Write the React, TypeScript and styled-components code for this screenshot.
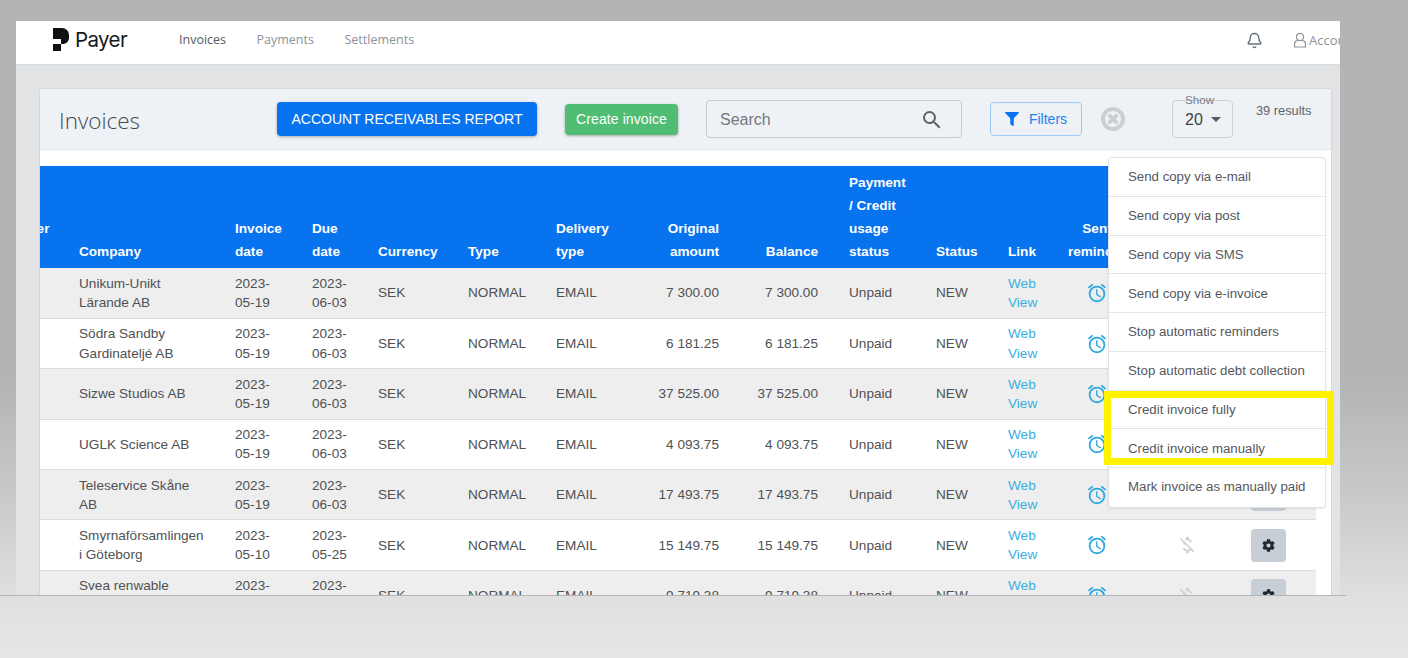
import * as React from 'react';
import styled, { createGlobalStyle } from 'styled-components';
import { Bell } from 'lucide-react';
import { FaCog, FaFilter } from 'react-icons/fa';
import { MdMoneyOff, MdOutlineAlarm, MdSearch } from 'react-icons/md';

const Global = createGlobalStyle`
  html, body { margin: 0; padding: 0; }
  body { font-family: "Liberation Sans", Arial, sans-serif; }
`;

const Desktop = styled.div`
  width: 1408px;
  height: 658px;
  overflow: hidden;
  padding-top: 21px;
  box-sizing: border-box;
  background: linear-gradient(180deg, #b3b4b3 0, #b3b4b3 58%, #c9cac9 76%, #dfe0df 91%, #e6e6e6 100%);
`;

const Window = styled.div`
  width: 1324px;
  height: 574px;
  margin-left: 16px;
  overflow: hidden;
  background: #e1e3e5;
  display: flex;
  flex-direction: column;
`;

const Ledge = styled.div`
  width: 1346px;
  height: 1px;
  background: #b4b6b6;
`;

const Nav = styled.nav`
  flex: none;
  height: 37px;
  background: #fff;
  border-bottom: 1px solid #d8dbde;
  display: flex;
  align-items: center;
  padding: 0 0 6px 37px;
  white-space: nowrap;
  overflow: hidden;
`;

const Logo = styled.div`
  display: flex;
  align-items: center;
  gap: 6px;
  width: 126px;
  font-family: Inter, sans-serif;
  font-size: 20.5px;
  letter-spacing: -0.6px;
  color: #16181b;
`;

const NavLink = styled.a<{ $active?: boolean }>`
  font-family: "Open Sans", sans-serif;
  font-size: 12.5px;
  color: ${(p) => (p.$active ? '#555b62' : '#8d939a')};
  margin-right: 30.5px;
`;

const Spacer = styled.div`
  flex: 1;
`;

const BellIcon = styled(Bell)`
  flex: none;
  color: #69727c;
  margin: 2px 30px 0 0;
`;

const Account = styled.div`
  flex: none;
  width: 88px;
  margin-right: -41px;
  display: flex;
  align-items: center;
  gap: 2px;
  font-family: "Open Sans", sans-serif;
  font-size: 13px;
  color: #8d939a;
`;

const Main = styled.main`
  flex: 1;
  padding: 23px 8px 0 23px;
`;

const Card = styled.section`
  position: relative;
  height: 520px;
  background: #fff;
  border: 1px solid #d3d6da;
  border-radius: 3px;
  box-sizing: border-box;
`;

const CardHead = styled.header`
  height: 61px;
  background: #eef1f5;
  border-bottom: 1px solid #e4e6e9;
  display: flex;
  align-items: center;
  padding-left: 19px;
  box-sizing: border-box;
`;

const Title = styled.h1`
  width: 218px;
  margin: 2px 0 0;
  flex: none;
  font-family: "Open Sans", sans-serif;
  font-weight: 300;
  font-size: 22.5px;
  color: #44494f;
`;

const Button = styled.button<{ $bg: string; $w: number; $h: number }>`
  flex: none;
  width: ${(p) => p.$w}px;
  height: ${(p) => p.$h}px;
  border: 0;
  padding: 0;
  border-radius: 4px;
  background: ${(p) => p.$bg};
  color: #fff;
  font-family: "Liberation Sans", Arial, sans-serif;
  font-size: 14px;
  box-shadow: 0 1px 3px rgba(0, 0, 0, 0.3);
`;

const CreateButton = styled(Button)`
  margin-left: 28px;
  letter-spacing: 0.1px;
`;

const SearchBox = styled.div`
  flex: none;
  width: 256px;
  height: 38px;
  margin-left: 28px;
  padding: 1px 17px 0 13px;
  box-sizing: border-box;
  border: 1px solid #c5cad0;
  border-radius: 4px;
  display: flex;
  align-items: center;
  justify-content: space-between;
  font-size: 16px;
  color: #75797e;
  svg {
    color: #5f6368;
  }
`;

const FilterButton = styled.button`
  flex: none;
  width: 92px;
  height: 34px;
  margin-left: 28px;
  background: transparent;
  border: 1px solid #9fcaf6;
  border-radius: 4px;
  display: flex;
  align-items: center;
  justify-content: center;
  gap: 10px;
  color: #2482ee;
  font-family: "Liberation Sans", Arial, sans-serif;
  font-size: 14px;
  svg {
    color: #0773ee;
  }
`;

const ClearIcon = styled.svg`
  flex: none;
  width: 24px;
  height: 24px;
  margin-left: 19px;
`;

const ShowBox = styled.div`
  position: relative;
  flex: none;
  width: 61px;
  height: 38px;
  margin-left: 47px;
  padding: 1px 0 0 12px;
  box-sizing: border-box;
  border: 1px solid #cdd1d6;
  border-radius: 4px;
  display: flex;
  align-items: center;
  gap: 8px;
  font-size: 16px;
  color: #3f4348;
`;

const ShowLabel = styled.span`
  position: absolute;
  top: -8px;
  left: 12px;
  font-size: 11.7px;
  line-height: 13px;
  color: #7c8186;
`;

const Caret = styled.span`
  width: 0;
  height: 0;
  border-left: 5px solid transparent;
  border-right: 5px solid transparent;
  border-top: 5px solid #55595e;
`;

const Results = styled.div`
  flex: none;
  align-self: flex-start;
  margin: 14px 0 0 23px;
  font-size: 12.8px;
  color: #5f6469;
`;

const TableScroll = styled.div`
  width: 1276px;
  margin-top: 16px;
  overflow: hidden;
`;

const Table = styled.table`
  width: 1347px;
  margin-left: -71px;
  table-layout: fixed;
  border-collapse: collapse;
  font-size: 13.6px;
`;

const Th = styled.th<{ $align?: string; $pr?: number }>`
  background: #0773ee;
  color: #fff;
  font-weight: 700;
  line-height: 23px;
  vertical-align: bottom;
  padding: 5px ${(p) => p.$pr ?? 12}px 5px 12px;
  text-align: ${(p) => p.$align ?? 'left'};
  overflow: hidden;
`;

const CustomerTh = styled(Th)`
  padding-left: 17px;
`;

const Tr = styled.tr`
  &:nth-child(odd) {
    background: #eeeeee;
  }
  &:nth-child(even) {
    background: #fff;
  }
  border-bottom: 1px solid #d9dce0;
`;

const Td = styled.td<{ $align?: string; $pr?: number }>`
  height: 50.4px;
  box-sizing: border-box;
  padding: 0 ${(p) => p.$pr ?? 12}px 0 12px;
  line-height: 19.2px;
  color: #4f5154;
  text-align: ${(p) => p.$align ?? 'left'};
  vertical-align: middle;
`;

const WebLink = styled.a`
  color: #3aaee0;
`;

const AlarmIcon = styled(MdOutlineAlarm)`
  display: block;
  margin: 0 auto;
  color: #2ba8e0;
`;

const OffIcon = styled(MdMoneyOff)`
  display: block;
  margin: 0 auto;
  color: #ced2d7;
`;

const GearButton = styled.button`
  width: 35px;
  height: 33px;
  margin-left: 4px;
  padding: 0;
  border: 0;
  border-radius: 4px;
  background: #c8ced6;
  color: #23282e;
  display: flex;
  align-items: center;
  justify-content: center;
`;

const Menu = styled.ul`
  position: absolute;
  left: 1068px;
  top: 68px;
  width: 218px;
  margin: 0;
  padding: 0;
  list-style: none;
  background: #fff;
  border: 1px solid #e0e2e5;
  border-radius: 4px;
  box-sizing: border-box;
  box-shadow: 0 1px 3px rgba(0, 0, 0, 0.08);
`;

const MenuItem = styled.li`
  height: 38.75px;
  box-sizing: border-box;
  padding-left: 19px;
  display: flex;
  align-items: center;
  font-size: 13.25px;
  color: #55585c;
  border-bottom: 1px solid #e2e4e6;
  &:last-child {
    height: 39px;
    padding-bottom: 2px;
    border-bottom: 0;
  }
`;

const Highlight = styled.div`
  position: absolute;
  left: 1064px;
  top: 302px;
  width: 230px;
  height: 74px;
  box-sizing: border-box;
  border: 7px solid #fff200;
`;

const menu = [
  'Send copy via e-mail',
  'Send copy via post',
  'Send copy via SMS',
  'Send copy via e-invoice',
  'Stop automatic reminders',
  'Stop automatic debt collection',
  'Credit invoice fully',
  'Credit invoice manually',
  'Mark invoice as manually paid',
];

const widths = [98, 156, 77, 66, 90, 88, 88, 99, 106, 87, 72, 59, 84, 96, 81];

const rows = [
  ['Unikum-Unikt Lärande AB', '05-19', '06-03', '7 300.00'],
  ['Södra Sandby Gardinateljé AB', '05-19', '06-03', '6 181.25'],
  ['Sizwe Studios AB', '05-19', '06-03', '37 525.00'],
  ['UGLK Science AB', '05-19', '06-03', '4 093.75'],
  ['Teleservice Skåne AB', '05-19', '06-03', '17 493.75'],
  ['Smyrnaförsamlingen i Göteborg', '05-10', '05-25', '15 149.75'],
  ['Svea renwable energy AB', '05-10', '05-25', '9 719.38'],
];

export default function App() {
  return (
    <Desktop>
      <Global />
      <Window>
        <Nav>
          <Logo>
            <svg width="16" height="23" viewBox="0 0 16 23" fill="#111">
              <path d="M0 0H9a7 7 0 0 1 7 7V10a6 6 0 0 1-6 6H8V11H0Z" />
              <rect x="0" y="16" width="8" height="7" />
            </svg>
            Payer
          </Logo>
          <NavLink $active>Invoices</NavLink>
          <NavLink>Payments</NavLink>
          <NavLink>Settlements</NavLink>
          <Spacer />
          <BellIcon size={17} strokeWidth={2} />
          <Account>
            <svg width="14" height="16" viewBox="0 0 14 16" fill="none" stroke="#8d939a" strokeWidth="1.2">
              <circle cx="7" cy="5" r="3.6" />
              <path d="M1.5 15v-3a3.5 3.5 0 0 1 3.5-3.5h4a3.5 3.5 0 0 1 3.5 3.5v3z" />
            </svg>
            Account
          </Account>
        </Nav>
        <Main>
          <Card>
            <CardHead>
              <Title>Invoices</Title>
              <Button $bg="#0773ee" $w={260} $h={34}>ACCOUNT RECEIVABLES REPORT</Button>
              <CreateButton $bg="#50bd75" $w={113} $h={31}>Create invoice</CreateButton>
              <SearchBox>
                Search
                <MdSearch size={24} />
              </SearchBox>
              <FilterButton>
                <FaFilter size={14} />
                Filters
              </FilterButton>
              <ClearIcon viewBox="0 0 24 24" fill="none" stroke="#ccced1">
                <circle cx="12" cy="12" r="10" strokeWidth="4" />
                <path d="M8.8 8.8l6.4 6.4M15.2 8.8l-6.4 6.4" strokeWidth="4" strokeLinecap="round" />
              </ClearIcon>
              <ShowBox>
                <ShowLabel>Show</ShowLabel>
                20
                <Caret />
              </ShowBox>
              <Results>39 results</Results>
            </CardHead>
            <TableScroll>
              <Table>
                <colgroup>
                  {widths.map((w, i) => (
                    <col key={i} width={w} />
                  ))}
                </colgroup>
                <thead>
                  <tr>
                    <CustomerTh>Customer no.</CustomerTh>
                    <Th>Company</Th>
                    <Th>Invoice date</Th>
                    <Th>Due date</Th>
                    <Th>Currency</Th>
                    <Th>Type</Th>
                    <Th>Delivery type</Th>
                    <Th $align="right">Original amount</Th>
                    <Th $align="right" $pr={19}>Balance</Th>
                    <Th>Payment / Credit usage status</Th>
                    <Th>Status</Th>
                    <Th>Link</Th>
                    <Th $align="center">Sent reminder</Th>
                    <Th />
                    <Th />
                  </tr>
                </thead>
                <tbody>
                  {rows.map(([company, date, due, amount]) => (
                    <Tr key={company}>
                      <Td />
                      <Td $pr={16}>{company}</Td>
                      <Td>2023-<br />{date}</Td>
                      <Td>2023-<br />{due}</Td>
                      <Td>SEK</Td>
                      <Td>NORMAL</Td>
                      <Td>EMAIL</Td>
                      <Td $align="right">{amount}</Td>
                      <Td $align="right" $pr={19}>{amount}</Td>
                      <Td>Unpaid</Td>
                      <Td>NEW</Td>
                      <Td><WebLink>Web View</WebLink></Td>
                      <Td><AlarmIcon size={22} /></Td>
                      <Td><OffIcon size={22} /></Td>
                      <Td><GearButton><FaCog size={13} /></GearButton></Td>
                    </Tr>
                  ))}
                </tbody>
              </Table>
            </TableScroll>
            <Menu>
              {menu.map((m) => (
                <MenuItem key={m}>{m}</MenuItem>
              ))}
            </Menu>
            <Highlight />
          </Card>
        </Main>
      </Window>
      <Ledge />
    </Desktop>
  );
}
